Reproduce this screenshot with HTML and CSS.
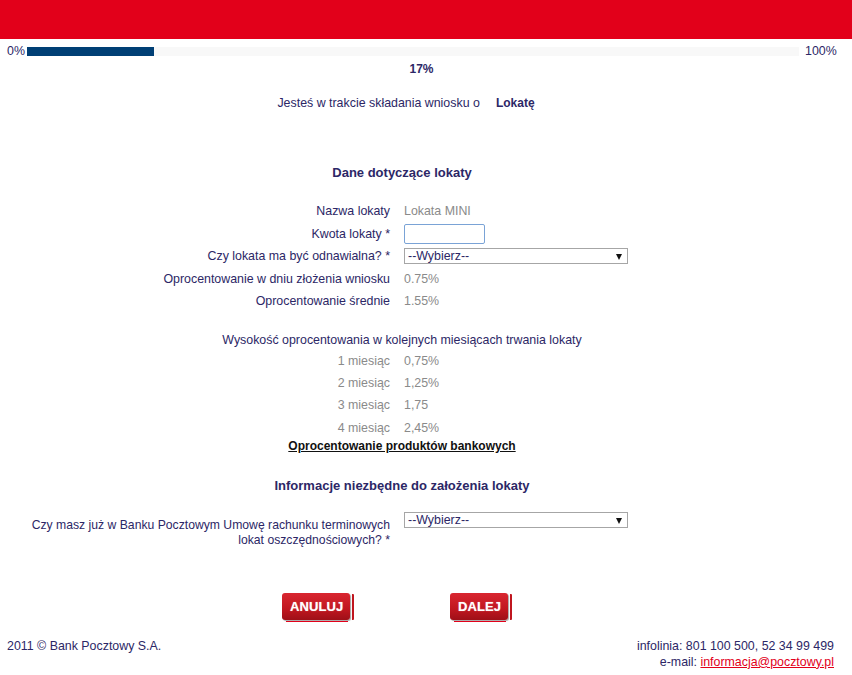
FILE: index.html
```html
<!DOCTYPE html>
<html lang="pl">
<head>
<meta charset="utf-8">
<title>Wniosek o Lokatę</title>
<link rel="stylesheet" href="styles.css">
</head>
<body>
<div class="topbar"></div>

<div class="progress">
  <span class="progress-min">0%</span>
  <div class="progress-track"><div class="progress-fill" style="width:16.4%"></div></div>
  <span class="progress-max">100%</span>
</div>
<div class="progress-value">17%</div>

<div class="form">
  <div class="intro">
    <span>Jesteś w trakcie składania wniosku o</span>
    <strong>Lokatę</strong>
  </div>

  <h2 class="section-title first">Dane dotyczące lokaty</h2>

  <div class="rows">
    <div class="row"><span class="label">Nazwa lokaty</span><span class="value">Lokata MINI</span></div>
    <div class="row"><span class="label">Kwota lokaty *</span><span class="value"><input class="text-input" type="text"></span></div>
    <div class="row"><span class="label">Czy lokata ma być odnawialna? *</span><span class="value"><span class="select"><select><option>--Wybierz--</option></select></span></span></div>
    <div class="row"><span class="label">Oprocentowanie w dniu złożenia wniosku</span><span class="value">0.75%</span></div>
    <div class="row"><span class="label">Oprocentowanie średnie</span><span class="value">1.55%</span></div>
  </div>

  <div class="subtitle">Wysokość oprocentowania w kolejnych miesiącach trwania lokaty</div>
  <div class="rows months">
    <div class="row"><span class="label grey">1 miesiąc</span><span class="value">0,75%</span></div>
    <div class="row"><span class="label grey">2 miesiąc</span><span class="value">1,25%</span></div>
    <div class="row"><span class="label grey">3 miesiąc</span><span class="value">1,75</span></div>
    <div class="row"><span class="label grey">4 miesiąc</span><span class="value">2,45%</span></div>
  </div>
  <div class="link-line"><a class="bank-link" href="#">Oprocentowanie produktów bankowych</a></div>

  <h2 class="section-title second">Informacje niezbędne do założenia lokaty</h2>
  <div class="rows second-rows">
    <div class="row top">
      <span class="label multi">Czy masz już w Banku Pocztowym Umowę rachunku terminowych lokat oszczędnościowych? *</span>
      <span class="value"><span class="select"><select><option>--Wybierz--</option></select></span></span>
    </div>
  </div>

  <div class="buttons">
    <button class="btn" type="button">ANULUJ</button>
    <button class="btn" type="button">DALEJ</button>
  </div>
</div>

<footer class="footer">
  <div class="copy">2011 © Bank Pocztowy S.A.</div>
  <div class="contact">
    <div>infolinia: 801 100 500, 52 34 99 499</div>
    <div>e-mail: <a class="mail" href="#">informacja@pocztowy.pl</a></div>
  </div>
</footer>
</body>
</html>
```

FILE: styles.css
```css
* { box-sizing: border-box; }

body {
  margin: 0;
  font-family: "Liberation Sans", Arial, sans-serif;
  font-size: 12.4px;
  line-height: 14px;
  color: #2c2766;
  background: #fff;
}

.topbar {
  height: 39px;
  background: #e2001a;
}

.progress {
  display: flex;
  align-items: center;
  padding: 0 17px 0 7px;
  margin-top: 5px;
  height: 14px;
}
.progress-min { width: 20px; }
.progress-track {
  flex: 1;
  height: 9px;
  background: #f8f8f8;
  margin-right: 6px;
}
.progress-fill {
  height: 9px;
  background: #003f75;
}
.progress-max { width: 30px; text-align: right; }

.progress-value {
  text-align: center;
  font-weight: bold;
  font-size: 12px;
  padding: 0 16px 0 7px;
  margin-top: 4px;
}

.form {
  width: 748px;
  margin-left: 28px;
}

.intro {
  display: flex;
  justify-content: center;
  gap: 16px;
  margin-top: 20px;
  padding-left: 8px;
}
.intro strong { font-weight: bold; font-size: 12px; }

.section-title {
  margin: 0;
  font-size: 13px;
  line-height: 15px;
  font-weight: bold;
  text-align: center;
}
.section-title.first { margin-top: 55px; }
.section-title.second { margin-top: 25px; }

.rows { margin-top: 20px; }
.second-rows { margin-top: 19px; }
.row {
  display: grid;
  grid-template-columns: 362px 1fr;
  column-gap: 14px;
  align-items: center;
  height: 22.5px;
}
.row.top { align-items: start; height: auto; }

.label { text-align: right; }
.label.grey { color: #8a8a8a; }
.label.multi { font-size: 12.2px; line-height: 15px; padding-top: 6px; }
.value { color: #8a8a8a; }

.text-input {
  display: block;
  width: 81px;
  height: 20px;
  border: 1px solid #7aa3d6;
  border-radius: 2px;
  outline: none;
  padding: 0 3px;
  font: inherit;
}

.select {
  position: relative;
  display: block;
  width: 224px;
  height: 16px;
}
.select select {
  -webkit-appearance: none;
  appearance: none;
  display: block;
  width: 224px;
  height: 16px;
  border: 1px solid #a6a6a6;
  border-radius: 0;
  background: #fff;
  padding: 0 0 0 3px;
  margin: 0;
  font-family: "Liberation Sans", Arial, sans-serif;
  font-size: 12.4px;
  line-height: 14px;
  color: #2c2766;
}
.select::after {
  content: "";
  position: absolute;
  right: 6px;
  top: 6px;
  border-left: 3.5px solid transparent;
  border-right: 3.5px solid transparent;
  border-top: 6px solid #111;
  pointer-events: none;
}

.subtitle {
  text-align: center;
  margin-top: 20px;
}
.months { margin-top: 3px; }
.months .row { height: 22.3px; }

.link-line { text-align: center; }
.bank-link {
  color: #111;
  font-size: 12px;
  font-weight: bold;
  text-decoration: underline;
}

.buttons {
  display: flex;
  justify-content: center;
  gap: 96px;
  margin-top: 45px;
  padding-right: 10px;
}
.btn {
  position: relative;
  height: 27px;
  padding: 0 8px;
  margin-right: 4px;
  border: 0;
  border-radius: 3px;
  background: linear-gradient(#d92630, #c0161f 60%, #9e1018);
  box-shadow: 1px 1px 1px rgba(0,0,0,0.35);
  color: #fff;
  font-family: "Liberation Sans", Arial, sans-serif;
  font-size: 13px;
  font-weight: bold;
  letter-spacing: 0.1px;
  text-shadow: 0 0 1px rgba(255,255,255,0.6);
}
.btn:first-child { width: 68px; }
.btn:last-child { width: 58px; }
.btn::after {
  content: "";
  position: absolute;
  right: -4px;
  top: 1px;
  width: 2px;
  height: 26px;
  background: #c0161f;
  border-radius: 0 1px 1px 0;
}
.btn::before {
  content: "";
  position: absolute;
  left: 4px;
  right: 2px;
  bottom: -2px;
  height: 1px;
  background: #e2001a;
}

.footer {
  display: flex;
  justify-content: space-between;
  align-items: flex-start;
  padding: 0 18px 0 7px;
  margin-top: 18px;
  line-height: 16px;
}
.contact { text-align: right; }
.mail {
  color: #e2001a;
  text-decoration: underline;
}
```
